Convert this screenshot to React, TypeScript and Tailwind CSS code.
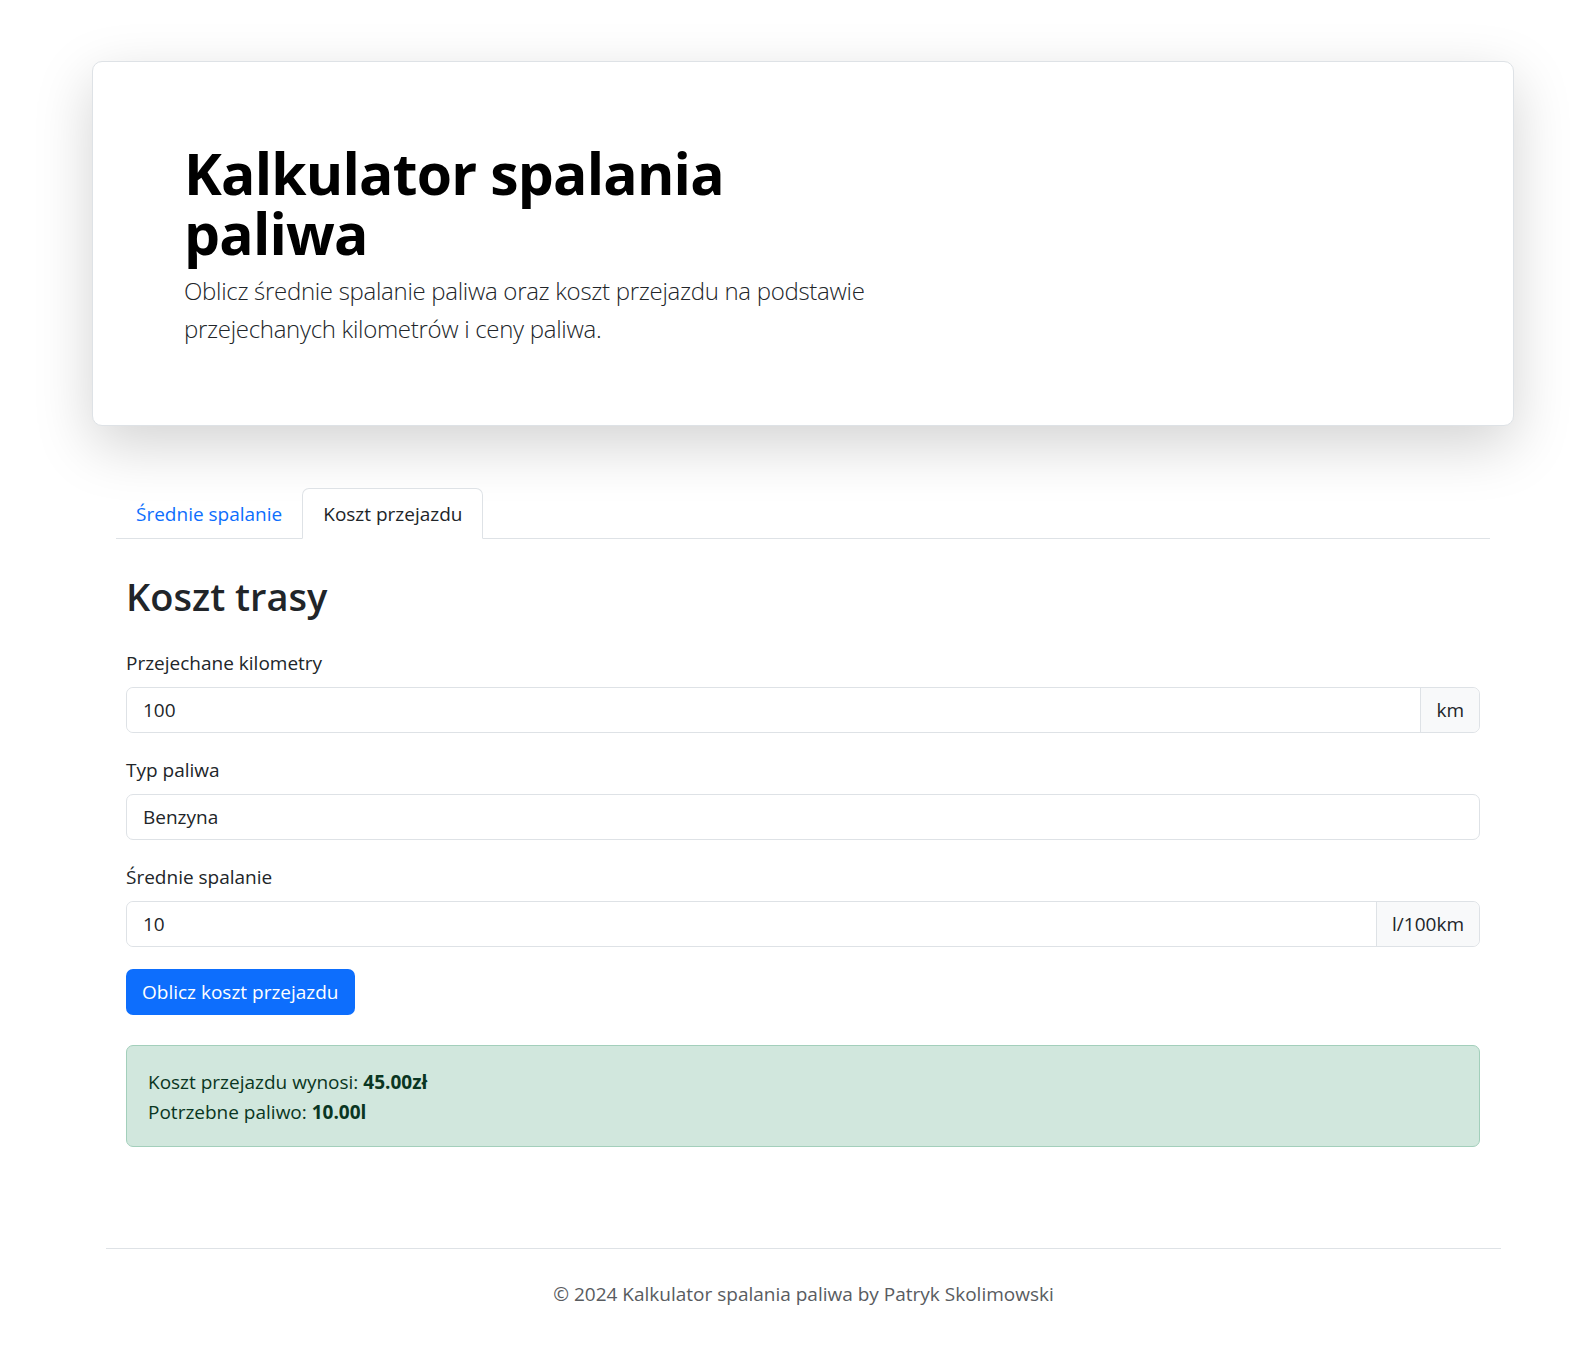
export default function App() {
  return (
    <div className="min-h-screen bg-white pb-[60px] font-['Open_Sans',sans-serif] text-[19px] text-[#212529]">
      <div className="pl-[92px] pt-[61px]">
        <section className="h-[365px] w-[1422px] rounded-[10px] border border-[#dee2e6] bg-white pl-[91px] pt-[81px] shadow-[0_19px_58px_rgba(0,0,0,0.175)]">
          <h1 className="w-[720px] text-[57px] font-bold leading-[60px] tracking-[-0.8px] text-black">Kalkulator spalania paliwa</h1>
          <p className="mt-[9px] w-[720px] text-[24px] font-light leading-[38px] tracking-[-0.3px] text-[#212529]">
            Oblicz średnie spalanie paliwa oraz koszt przejazdu na podstawie przejechanych kilometrów i ceny paliwa.
          </p>
        </section>
      </div>

      <main className="ml-[116px] mt-[62px] w-[1374px]">
        <nav className="flex border-b border-[#dee2e6]">
          <button type="button" className="h-[50px] px-[20px] pt-[2px] text-[#0d6efd]">Średnie spalanie</button>
          <button type="button" className="-mb-px h-[51px] rounded-t-[7px] border border-b-white border-[#dee2e6] bg-white px-[20px] pt-[2px] text-[#212529]">
            Koszt przejazdu
          </button>
        </nav>

        <div className="px-[10px] pt-[34px]">
          <h2 className="text-[38px] font-semibold leading-[46px]">Koszt trasy</h2>

          <div className="mt-[30px] flex flex-col gap-[23px]">
            <div>
              <label className="mb-[9px] block leading-[29px]">Przejechane kilometry</label>
              <div className="flex h-[46px] rounded-[7px] border border-[#dee2e6]">
                <input readOnly value="100" className="min-w-0 flex-1 rounded-l-[7px] bg-white px-[16px] outline-none" />
                <span className="flex items-center rounded-r-[7px] border-l border-[#dee2e6] bg-[#f8f9fa] px-[15px]">km</span>
              </div>
            </div>

            <div>
              <label className="mb-[9px] block leading-[29px]">Typ paliwa</label>
              <div className="flex h-[46px] items-center rounded-[7px] border border-[#dee2e6] px-[16px]">Benzyna</div>
            </div>

            <div>
              <label className="mb-[9px] block leading-[29px]">Średnie spalanie</label>
              <div className="flex h-[46px] rounded-[7px] border border-[#dee2e6]">
                <input readOnly value="10" className="min-w-0 flex-1 rounded-l-[7px] bg-white px-[16px] outline-none" />
                <span className="flex items-center rounded-r-[7px] border-l border-[#dee2e6] bg-[#f8f9fa] px-[15px]">l/100km</span>
              </div>
            </div>
          </div>

          <button type="button" className="mt-[22px] h-[46px] rounded-[7px] bg-[#0d6efd] px-[16px] text-white">Oblicz koszt przejazdu</button>

          <div className="mt-[30px] rounded-[7px] border border-[#a3cfbb] bg-[#d1e7dd] px-[21px] pb-[19px] pt-[21px] leading-[30px] text-[#0a3622]">
            <p>
              Koszt przejazdu wynosi: <strong>45.00zł</strong>
            </p>
            <p>
              Potrzebne paliwo: <strong>10.00l</strong>
            </p>
          </div>
        </div>
      </main>

      <footer className="mt-[101px]">
        <hr className="ml-[106px] w-[1395px] border-[#dee2e6]" />
        <p className="ml-[106px] w-[1395px] pt-[31px] text-center text-[#595c5f]">© 2024 Kalkulator spalania paliwa by Patryk Skolimowski</p>
      </footer>
    </div>
  )
}
